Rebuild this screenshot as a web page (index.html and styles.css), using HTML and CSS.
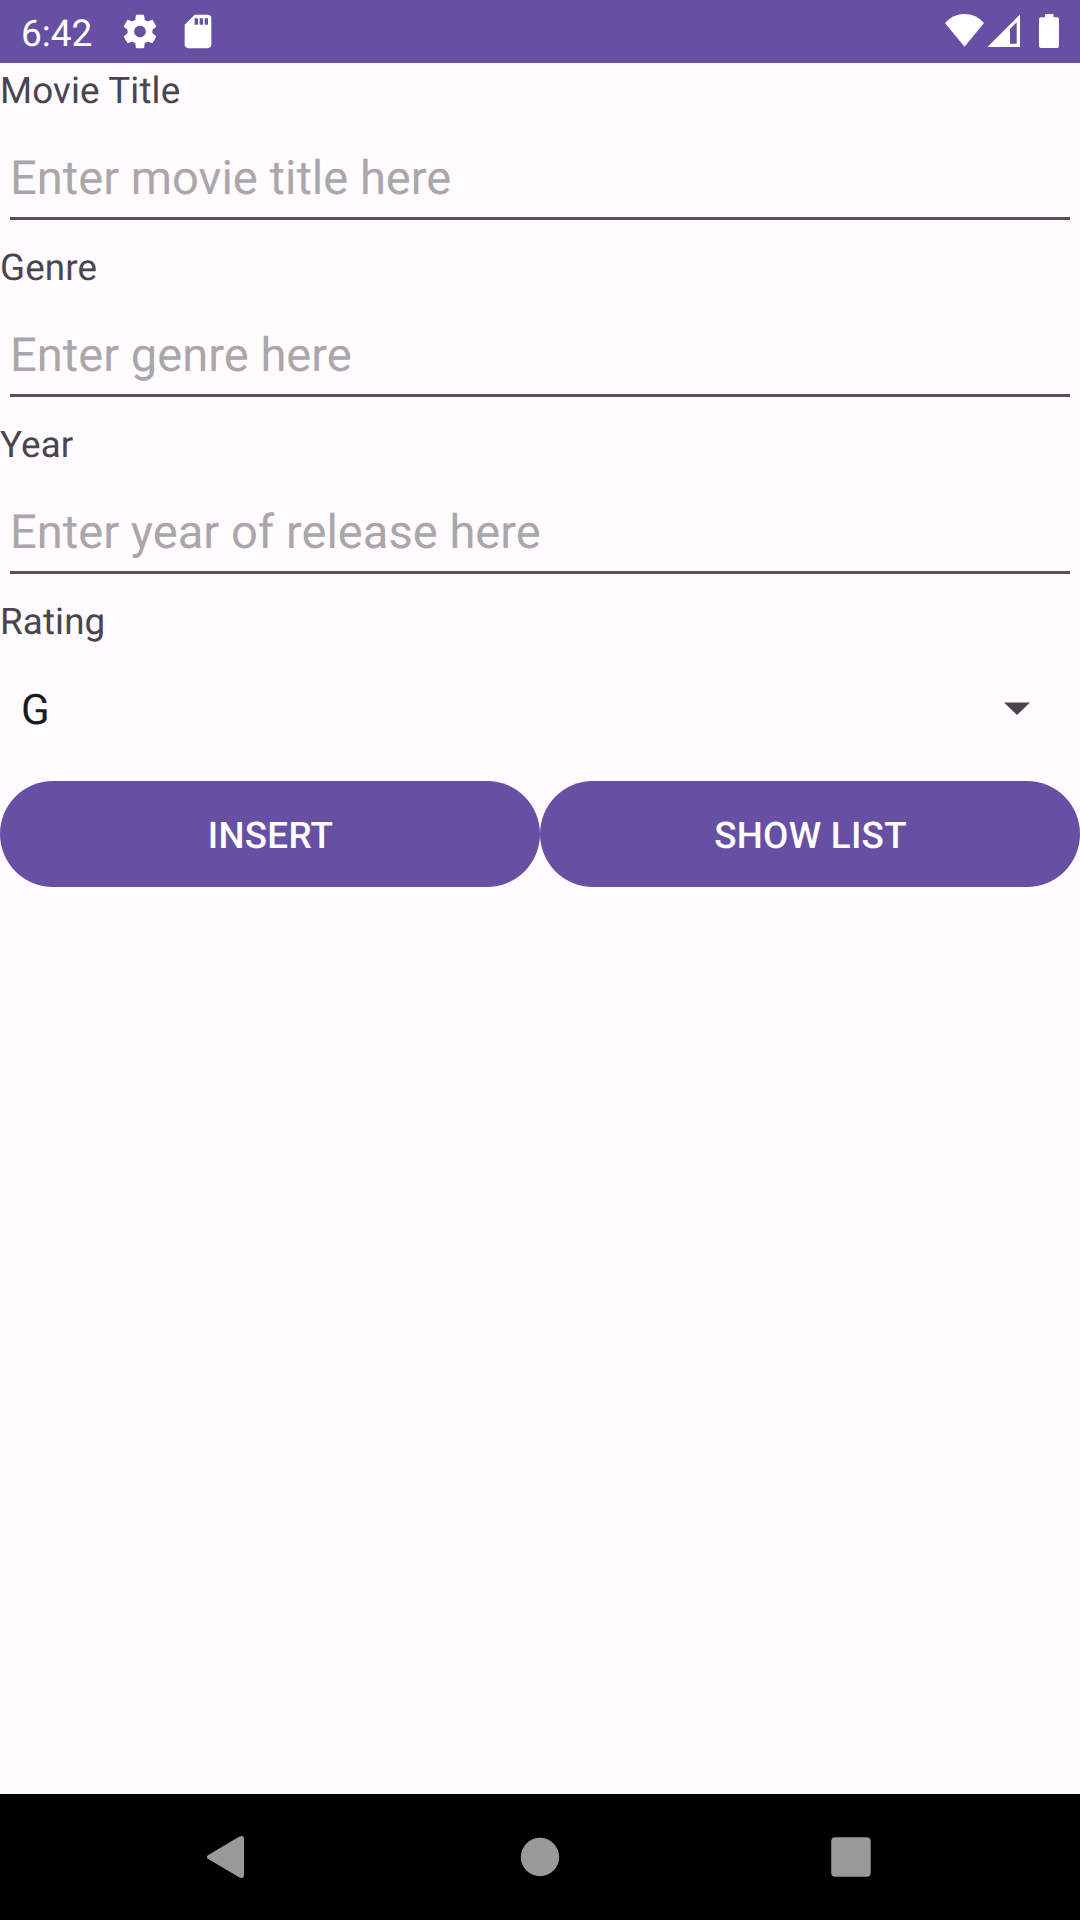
FILE: index.html
```html
<!DOCTYPE html>
<html lang="en">
<head>
<meta charset="utf-8">
<title>Movies</title>
<link rel="stylesheet" href="styles.css">
</head>
<body>
<div class="screen">
  <header class="status">
    <span class="clock">6:42</span>
    <svg class="gear" width="40" height="39" viewBox="0 0 24 23.400"><path fill="currentColor" transform="translate(0 -.3)" d="M19.43 12.98c.04-.32.07-.64.07-.98s-.03-.66-.07-.98l2.11-1.65c.19-.15.24-.42.12-.64l-2-3.46c-.12-.22-.39-.3-.61-.22l-2.49 1c-.52-.4-1.08-.73-1.69-.98l-.38-2.65C14.46 2.18 14.25 2 14 2h-4c-.25 0-.46.18-.49.42l-.38 2.65c-.61.25-1.17.59-1.69.98l-2.49-1c-.23-.09-.49 0-.61.22l-2 3.46c-.13.22-.07.49.12.64l2.11 1.65c-.04.32-.07.65-.07.98s.03.66.07.98l-2.11 1.65c-.19.15-.24.42-.12.64l2 3.46c.12.22.39.3.61.22l2.49-1c.52.4 1.08.73 1.69.98l.38 2.65c.03.24.24.42.49.42h4c.25 0 .46-.18.49-.42l.38-2.65c.61-.25 1.17-.59 1.69-.98l2.49 1c.23.09.49 0 .61-.22l2-3.46c.12-.22.07-.49-.12-.64l-2.11-1.65zM12 15.5c-1.93 0-3.5-1.57-3.5-3.5s1.57-3.5 3.5-3.5 3.500 1.570 3.500 3.500-1.570 3.500-3.500 3.500z"/></svg>
    <svg class="card" width="40" height="39" viewBox="0 0 24 23.400"><path fill="currentColor" transform="translate(0 -.3)" d="M18 2h-8L4.020 8 4 20c0 1.100.9 2 2 2h12c1.100 0 2-.9 2-2V4c0-1.100-.9-2-2-2zm-6 6h-2V4h2v4zm3 0h-2V4h2v4zm3 0h-2V4h2v4z"/></svg>
    <svg class="signals" width="116" height="37" viewBox="944 13 116 37">
      <path fill="currentColor" d="M945 23Q953 14 964.500 14T984 23L964.500 46.800Z"/>
      <path fill="currentColor" fill-rule="evenodd" d="M987.500 47L1020 14.500V47ZM1010 29V43.700H1016.700V22.300Z"/>
      <path fill="currentColor" d="M1045 14h8.500v3.300h3.500a2 2 0 0 1 2 2v26.700a2 2 0 0 1-2 2h-16a2 2 0 0 1-2-2v-26.700a2 2 0 0 1 2-2h4z"/>
    </svg>
  </header>
  <main class="form">
    <label class="label" for="title">Movie Title</label>
    <div class="field"><input class="input" id="title" placeholder="Enter movie title here"></div>
    <label class="label" for="genre">Genre</label>
    <div class="field"><input class="input" id="genre" placeholder="Enter genre here"></div>
    <label class="label" for="year">Year</label>
    <div class="field"><input class="input" id="year" placeholder="Enter year of release here"></div>
    <div class="label">Rating</div>
    <div class="spinner">
      <span class="value">G</span>
      <svg width="26" height="13" viewBox="0 0 26 13"><path fill="#49454f" d="M0 .4H26L13 13Z"/></svg>
    </div>
    <div class="actions">
      <button class="button">INSERT</button>
      <button class="button">SHOW LIST</button>
    </div>
  </main>
  <nav class="navbar">
    <svg width="666" height="44" viewBox="206 1835 666 44">
      <path fill="#999" d="M207.800 1855.200L239.500 1836.400Q244 1834.800 244 1839V1875Q244 1879.200 239.500 1877.600L207.800 1858.800Q206 1857 207.800 1855.200Z"/>
      <circle fill="#999" cx="540" cy="1857" r="19.200"/>
      <rect fill="#999" x="831.200" y="1837.200" width="39.500" height="39.500" rx="4"/>
    </svg>
  </nav>
</div>
</body>
</html>
```
FILE: styles.css
```css
* { box-sizing: border-box; }

body {
  margin: 0;
  font-family: Roboto, "Liberation Sans", sans-serif;
  text-rendering: geometricPrecision;
  background: #fffbff;
}

.screen {
  display: flex;
  flex-direction: column;
  width: 1080px;
  height: 1920px;
}

svg { display: block; flex: none; }

.status {
  display: flex;
  align-items: center;
  height: 63px;
  padding: 0 20px 0 21px;
  background: #6750a4;
  color: #fff;
}

.clock {
  width: 99px;
  font-size: 37px;
  line-height: 43px;
  padding-top: 5px;
}

.card { margin-left: 18px; }
.signals { margin-left: auto; }

.form {
  display: flex;
  flex: 1;
  flex-direction: column;
}

.label {
  height: 49px;
  padding-top: 6px;
  font-size: 36.75px;
  line-height: 43px;
  letter-spacing: 0.004em;
  color: #49454f;
}

.field {
  height: 128px;
  padding: 20px 10px 0;
}

.input {
  display: block;
  width: 100%;
  height: 88px;
  padding: 8px 0 0;
  border: 0;
  border-bottom: 3px solid #56525c;
  outline: 0;
  background: none;
  font: 47.1px Roboto, "Liberation Sans", sans-serif;
  text-rendering: geometricPrecision;
}

.input::placeholder { color: #a9a7aa; opacity: 1; }

.spinner {
  display: flex;
  align-items: center;
  justify-content: space-between;
  height: 127px;
  padding: 4px 50px 0 21px;
  font-size: 42px;
  line-height: 50px;
  color: #1c1b1f;
}

.value { padding-top: 4px; }

.actions {
  display: flex;
  padding-top: 11px;
}

.button {
  flex: 1;
  height: 106px;
  padding: 2px 0 0 1px;
  border: 0;
  border-radius: 53px;
  background: #6750a4;
  color: #fff;
  font: 500 36.75px Roboto, "Liberation Sans", sans-serif;
  letter-spacing: 0.008em;
  text-rendering: geometricPrecision;
}

.navbar {
  display: flex;
  align-items: center;
  height: 126px;
  padding-left: 206px;
  background: #000;
}
```
